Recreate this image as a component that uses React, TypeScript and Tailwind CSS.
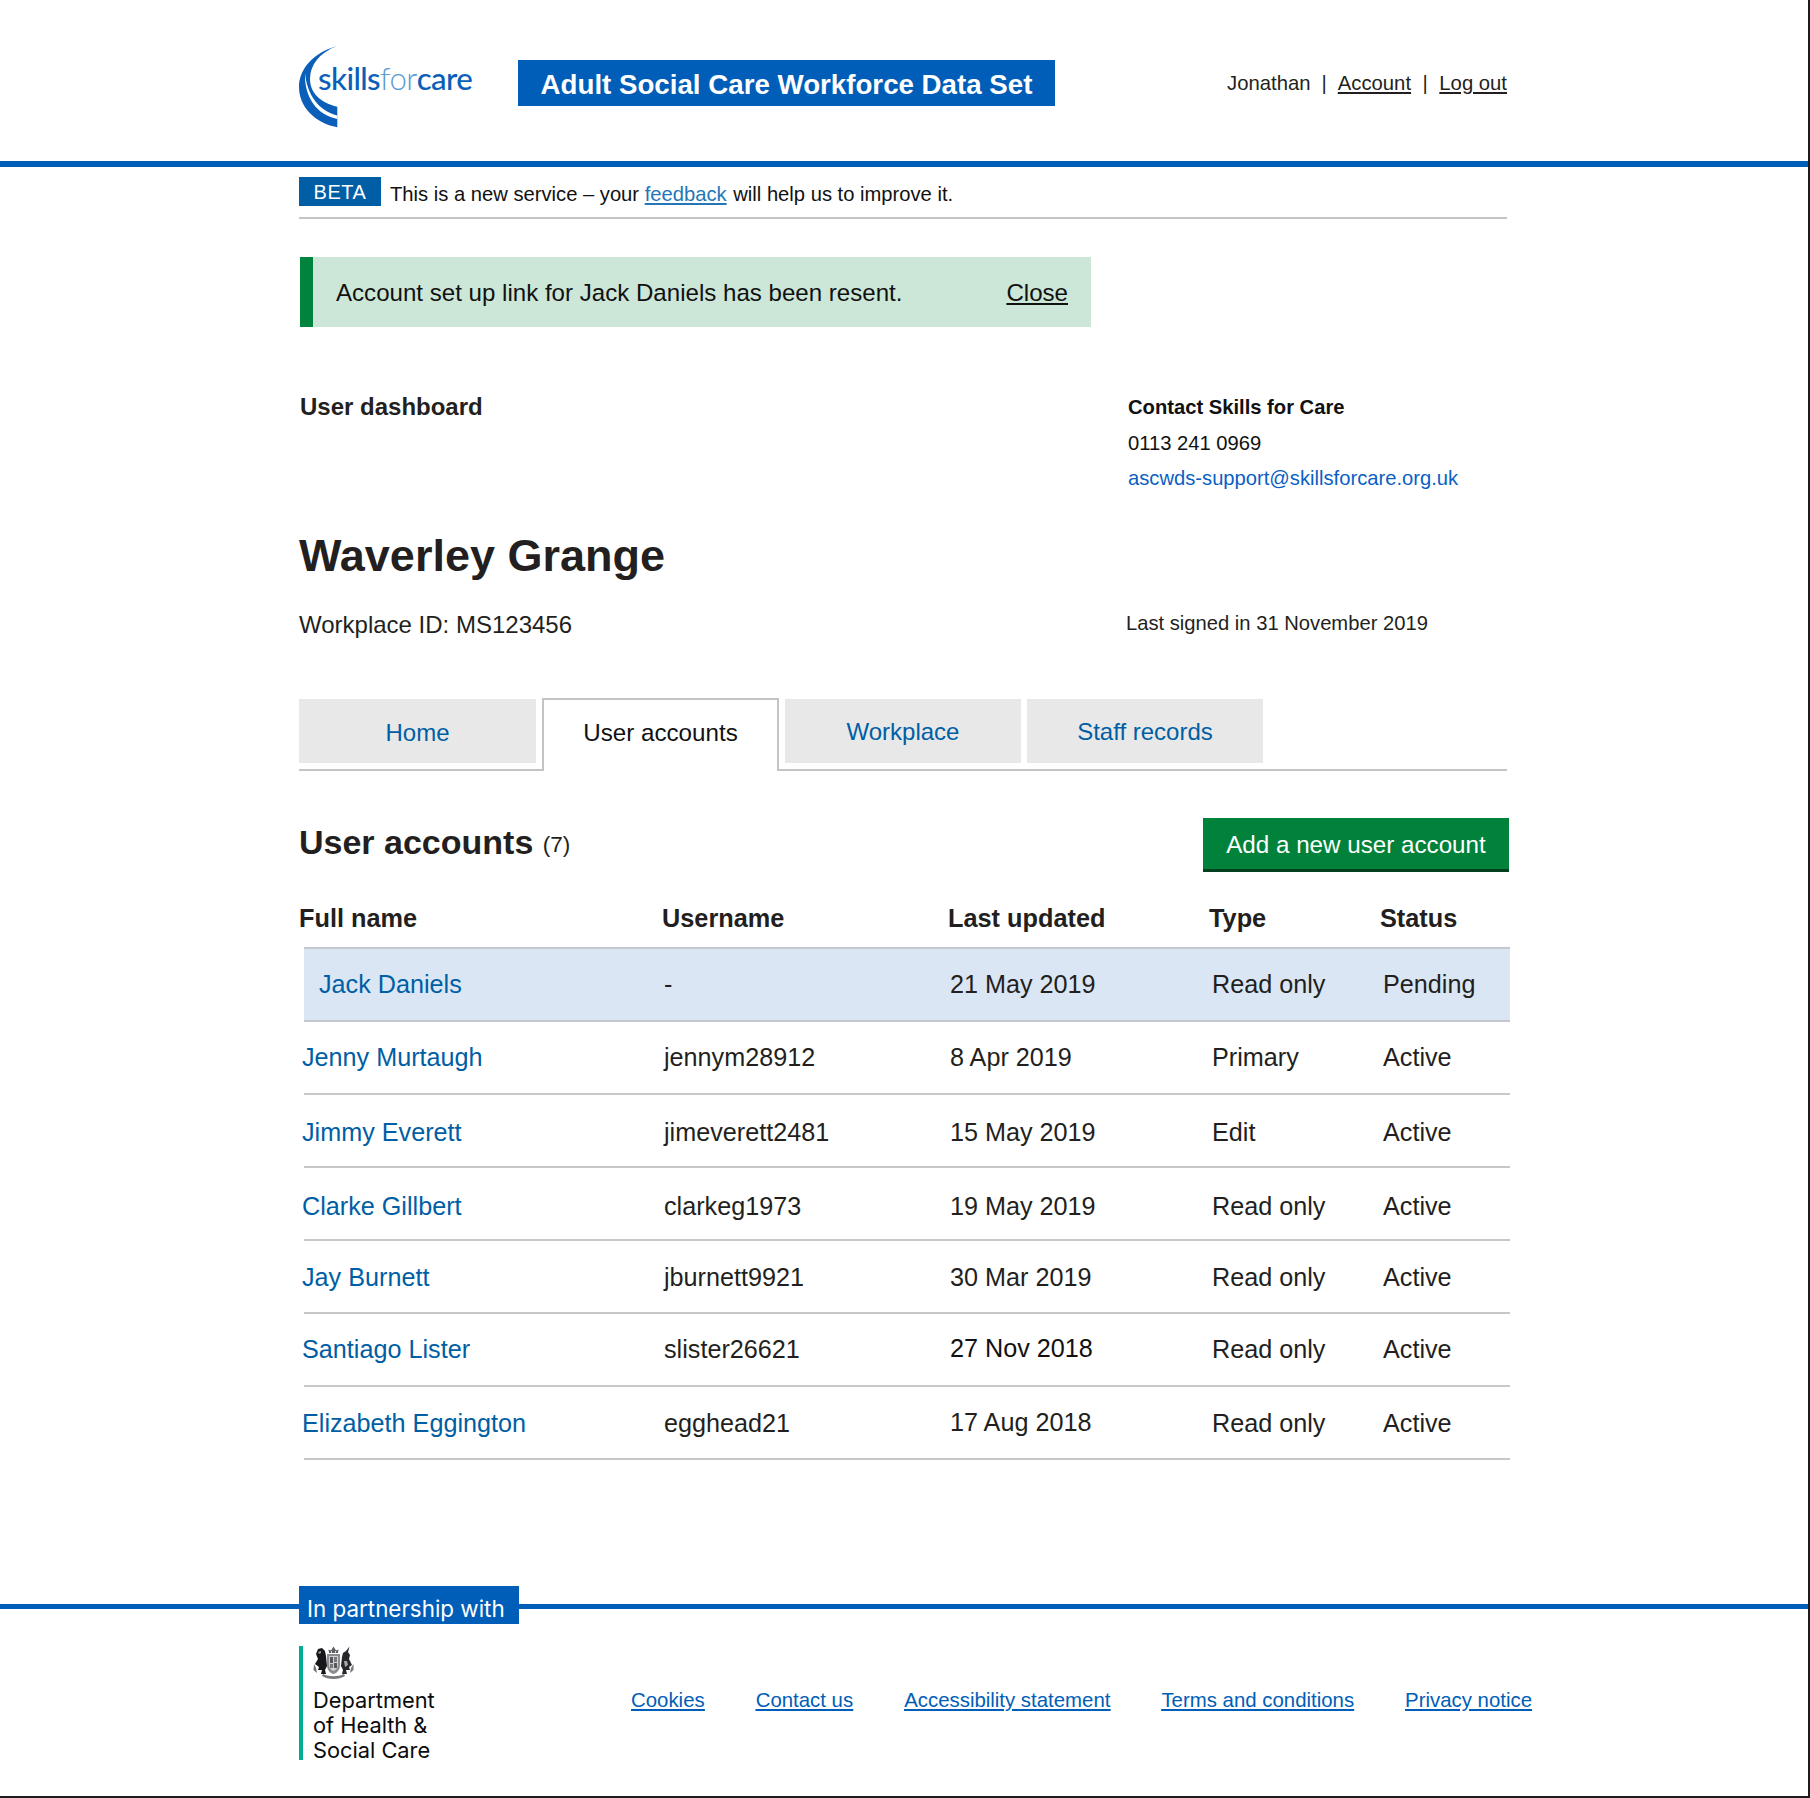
const users = [
  { name: 'Jenny Murtaugh', username: 'jennym28912', updated: '8 Apr 2019', type: 'Primary', status: 'Active', shift: 'pt-0', date: '' },
  { name: 'Jimmy Everett', username: 'jimeverett2481', updated: '15 May 2019', type: 'Edit', status: 'Active', shift: 'pt-[4px]', date: '' },
  { name: 'Clarke Gillbert', username: 'clarkeg1973', updated: '19 May 2019', type: 'Read only', status: 'Active', shift: 'pt-[7px]', date: '' },
  { name: 'Jay Burnett', username: 'jburnett9921', updated: '30 Mar 2019', type: 'Read only', status: 'Active', shift: 'pt-[2px]', date: '' },
  { name: 'Santiago Lister', username: 'slister26621', updated: '27 Nov 2018', type: 'Read only', status: 'Active', shift: 'pt-0', date: '-mt-[2px] text-[#111111]' },
  { name: 'Elizabeth Eggington', username: 'egghead21', updated: '17 Aug 2018', type: 'Read only', status: 'Active', shift: 'pt-[2px]', date: '-mt-[2px]' },
]

const tabs = ['Home', 'User accounts', 'Workplace', 'Staff records']
const footerLinks = ['Cookies', 'Contact us', 'Accessibility statement', 'Terms and conditions', 'Privacy notice']

const Logo = () => (
  <div className="relative h-[84px] w-[176px]">
    <svg viewBox="0 0 50 84" className="absolute left-0 top-0 h-[84px] w-[50px]">
      <path
        d="M38 1 C14 8 0 24 0 42 C0 62 16 78 38.3 82.3 L38.3 61.7 C22 58 11 48 11 34 C11 20 20 8 38 1 Z"
        fill="#0b5fb8"
      />
      <path d="M38.3 70.5 C20 66 8 50 6 28 C5 52 18 70 38.3 74 Z" fill="#ffffff" />
    </svg>
    <span className="absolute left-[19px] top-[13px] font-['Lato',sans-serif] text-[31.2px] font-medium leading-[40px] tracking-[-0.6px] text-[#0b5fb8]">
      skills<span className="font-light text-[#5b9bd8]">for</span>care
    </span>
  </div>
)

const Crest = () => (
  <svg viewBox="0 0 41 34" className="h-[34px] w-[41px]">
    {/* lion */}
    <path d="M2 18 L5 13 L3 8 L5 3 L9 2 L12 5 L13 10 L14 20 L12 24 L13 28 L8 28 L9 24 L5 24 L6 21 Z" fill="#17171b" />
    <path d="M3 22 L1 18 L0.5 24 L4 27 Z" fill="#6d6d72" />
    <path d="M5 6 L8 5 L8 7 L6 8 Z" fill="#9a9a9f" />
    {/* unicorn */}
    <path d="M39 19 L36 13 L37 9 L35 6 L36.5 0.5 L33 5 L30 7 L29 11 L28 20 L30 24 L29 28 L34 28 L33 24 L37 24 L36 21 Z" fill="#26262b" />
    <path d="M38 22 L40.5 18 L40.5 24 L37 27 Z" fill="#77777c" />
    <path d="M31 15 L34 15 L35 19 L32 21 Z" fill="#a8a8ad" />
    {/* crown */}
    <path d="M16 7 L15.5 3.5 L18 4.5 L20.5 0.5 L23 4.5 L25.5 3.5 L25 7 Z" fill="#5f5f64" />
    <path d="M18 5 H19 V7 H18 Z M22 5 H23 V7 H22 Z" fill="#d5d5d8" />
    {/* shield */}
    <path d="M14 8 H27 V19 C27 24 24 27 20.5 28 C17 27 14 24 14 19 Z" fill="#8a8a8f" />
    <path d="M16 10 H25 V19 C25 22 23 24 20.5 25 C18 24 16 22 16 19 Z" fill="#d0d0d3" />
    <path d="M17 11 H20 V17 H17 Z M21 17 H24 V22 H21 Z" fill="#55555a" />
    <path d="M21 11 H24 V16 H21 Z M17 18 H20 V22 H17 Z" fill="#77777c" />
    {/* motto */}
    <path d="M9 30 C15 34 26 34 32 30 L31 28 C25 31 16 31 10 28 Z" fill="#77777c" />
  </svg>
)

const PageRow = ({ className, children }: { className?: string; children: React.ReactNode }) => (
  <div className={`mx-auto w-[1210px] ${className ?? ''}`}>{children}</div>
)

export default function App() {
  return (
    <div className="min-h-[1798px] w-[1810px] border-r-2 border-b-2 border-[#1c1c1c] bg-white font-['Liberation_Sans',Arial,sans-serif] text-[#231f20]">
      <header className="h-[167px] border-b-[6px] border-[#005eb8]">
        <PageRow className="flex h-[161px]">
          <div className="mt-[45px]">
            <Logo />
          </div>
          <div className="ml-[43px] mt-[60px] flex h-[46px] w-[537px] items-center justify-center bg-[#005eb8] pt-[4px] text-[27.7px] font-bold text-white">
            Adult Social Care Workforce Data Set
          </div>
          <div className="ml-auto mr-[2px] mt-[71px] flex h-[24px] items-center text-[20.3px]">
            <span>Jonathan</span>
            <span className="mx-[11px]">|</span>
            <a className="underline">Account</a>
            <span className="mx-[11.5px]">|</span>
            <a className="underline">Log out</a>
          </div>
        </PageRow>
      </header>

      <PageRow>
        <div className="flex h-[52px] w-[1208px] items-start border-b-2 border-[#c4c4c4] pt-[10px]">
          <span className="flex h-[29px] w-[82px] items-center justify-center bg-[#005ea5] text-[20px] tracking-[0.5px] text-white">
            BETA
          </span>
          <p className="ml-[9px] mt-[3px] text-[20.2px] leading-[29px] text-[#111111]">
            This is a new service – your <a className="mr-[1px] text-[#2377b8] underline">feedback</a> will help us to improve it.
          </p>
        </div>

        <div className="ml-px mt-[38px] flex h-[70px] w-[791px] items-center justify-between border-l-[13px] border-[#00843d] bg-[#cce6d8] pl-[23px] pr-[23px] pt-[2px] text-[24.1px] text-[#111111]">
          <span>Account set up link for Jack Daniels has been resent.</span>
          <a className="underline">Close</a>
        </div>

        <div className="mt-[62px] flex">
          <p className="ml-px w-[828px] text-[24px] font-bold leading-[36px]">User dashboard</p>
          <div className="pt-px text-[20.2px] leading-[35.7px] text-[#111111]">
            <p className="font-bold">Contact Skills for Care</p>
            <p>0113 241 0969</p>
            <a className="text-[#0b5fc4]">ascwds-support@skillsforcare.org.uk</a>
          </div>
        </div>

        <h1 className="mt-[31px] text-[45px] font-bold leading-[56px]">Waverley Grange</h1>

        <div className="mt-[23px] flex items-center">
          <p className="w-[827px] text-[24px] leading-[36px]">Workplace ID: MS123456</p>
          <p className="-mt-[4px] text-[20.2px]">Last signed in 31 November 2019</p>
        </div>

        <nav className="mt-[55px] flex h-[73px] w-[1208px] items-start gap-[6px] border-b-2 border-[#c4c4c4]">
          {tabs.map((tab) =>
            tab === 'User accounts' ? (
              <a
                key={tab}
                className="relative z-10 flex h-[73px] w-[237px] items-center justify-center border-x-2 border-t-2 border-[#c4c4c4] bg-white pb-[4px] text-[24.2px] text-[#111111]"
              >
                {tab}
              </a>
            ) : (
              <a
                key={tab}
                className={`mt-px flex h-[64px] items-center justify-center bg-[#e8e8e8] text-[24px] text-[#005ea5] ${tab === 'Home' ? 'w-[237px] pt-[4px]' : 'w-[236px] pt-[2px]'}`}
              >
                {tab}
              </a>
            ),
          )}
        </nav>

        <div className="mt-[47px] flex h-[54px] items-center justify-between">
          <h2 className="-mt-[6px] text-[34px] font-bold">
            User accounts <span className="align-[2px] text-[22.5px] font-normal">(7)</span>
          </h2>
          <a className="flex h-[54px] w-[306px] items-center justify-center border-b-[3px] border-[#00401e] bg-[#00823b] pt-[3px] text-[24.2px] text-white">
            Add a new user account
          </a>
        </div>

        <div className="mt-[24px] grid h-[51px] grid-cols-[363px_286px_261px_171px_129px] text-[25.3px] font-bold leading-[44px]">
          <span>Full name</span>
          <span>Username</span>
          <span>Last updated</span>
          <span>Type</span>
          <span>Status</span>
        </div>

        <div className="ml-[5px] grid h-[75px] w-[1206px] grid-cols-[360px_286px_262px_171px_127px] items-center border-y-2 border-[#c4c8cc] bg-[#dbe6f4] text-[25.2px]">
          <a className="pl-[15px] text-[#005ea5]">Jack Daniels</a>
          <span>-</span>
          <span>21 May 2019</span>
          <span>Read only</span>
          <span>Pending</span>
        </div>

        {users.map((user) => (
          <div
            key={user.name}
            className={`ml-[5px] grid h-[73px] w-[1206px] grid-cols-[360px_286px_262px_171px_127px] items-center border-b-2 border-[#c8c8c8] text-[25.2px] ${user.shift}`}
          >
            <a className="-ml-[2px] text-[#005ea5]">{user.name}</a>
            <span>{user.username}</span>
            <span className={user.date}>{user.updated}</span>
            <span>{user.type}</span>
            <span>{user.status}</span>
          </div>
        ))}
      </PageRow>

      <footer className="mt-[144px] border-t-[5px] border-[#005eb8] font-['Inter',sans-serif]">
        <PageRow>
          <div className="-mt-[23px] h-[38px] w-[220px] overflow-hidden bg-[#005eb8] pl-[8px] text-[22.4px] leading-[46px] text-white">
            In partnership with
          </div>
          <div className="mt-[22px] flex">
            <div className="h-[114px] w-[242px] shrink-0 border-l-[4px] border-[#00ad93] pl-[10px]">
              <Crest />
              <p className="mt-[8px] text-[21.8px] leading-[25px] text-[#0b0c0c]">
                Department
                <br />
                of Health &amp;
                <br />
                Social Care
              </p>
            </div>
            <div className="ml-[90px] mt-[40px] flex h-[28px] shrink-0 items-center gap-[51px] whitespace-nowrap font-['Liberation_Sans',Arial,sans-serif] text-[20.4px] text-[#005eb8] underline">
              {footerLinks.map((link) => (
                <a key={link}>{link}</a>
              ))}
            </div>
          </div>
        </PageRow>
      </footer>
    </div>
  )
}
